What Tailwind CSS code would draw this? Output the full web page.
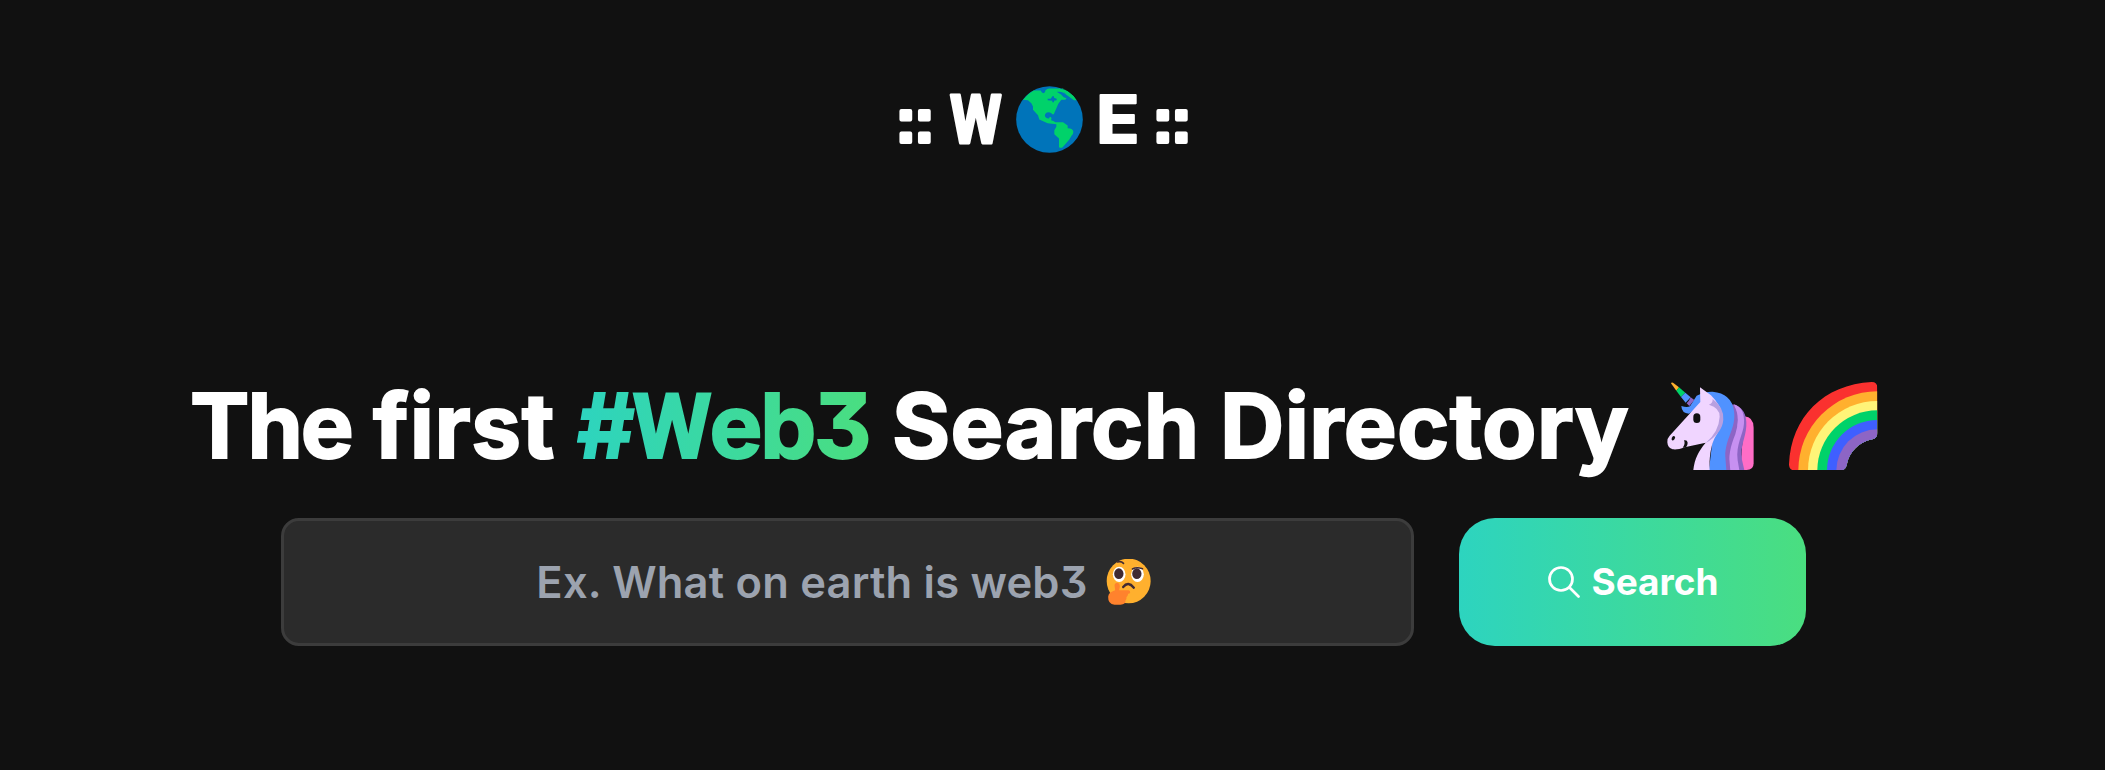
<!DOCTYPE html>
<html lang="en">
<head>
<meta charset="utf-8">
<title>WOE</title>
<script src="https://cdn.jsdelivr.net/npm/@tailwindcss/browser@4"></script>
</head>
<body class="h-[770px] overflow-hidden bg-[#111111] font-['Inter',sans-serif] text-white [font-feature-settings:'cv09']">
<header class="flex h-[239px] justify-center pt-[80px] pr-[20px]">
  <svg class="h-[80px] w-[300px]" viewBox="893 80 300 80" role="img" aria-label="WOE">
    <g fill="#fff" stroke="#fff" stroke-width="4" stroke-linejoin="round" font-weight="700">
      <text x="895.5" y="142" font-family="Liberation Sans" font-size="62" letter-spacing="-2.2">::</text>
      <text x="950" y="142.500" font-family="Roboto" font-size="67" stroke-width="3" textLength="51.5" lengthAdjust="spacingAndGlyphs">W</text>
      <text x="1096" y="143" font-family="Inter" font-size="66" stroke-width="2" textLength="43.5" lengthAdjust="spacingAndGlyphs">E</text>
      <text x="1152.5" y="142" font-family="Liberation Sans" font-size="62" letter-spacing="-2.2">::</text>
    </g>
    <svg x="1016" y="86" width="67" height="67" viewBox="33 32.5 201 201">
      <circle cx="133.500" cy="133" r="100" fill="#0074ba"/>
      <path fill="#00d26a" d="M54 74Q67 56 86 46H107Q110 54 116 54Q122 51 121 46Q127 40 133 40H163L174 49Q180 56 188 57L207 75H214Q200 55 179 43L168 40H174L214 75H207L176 53L166 50H155L168 58L176 66L184 69Q185 73 179 74H169L160 86L147 116Q144 120 141 116Q136 109 126 112Q118 116 120 124Q124 131 132 130Q133 125 138 126Q141 129 138 135Q146 137 151 141H174L188 151V159Q205 160 205 170Q205 178 200 181L193 193L173 216Q168 220 162 216V190L148 177V165L154 155V147L128 144L103 133L99 120L84 104V94L79 84L69 75Z"/>
      <path fill="#00d26a" d="M162 40Q195 45 215 75H207L179 53L168 49L155 47Z"/>
      <path fill="#0074ba" d="M142 63H147V68L155 71V75L147 77V81H142V77L128 75V71H137Z"/>
    </svg>
  </svg>
</header>

<main>
  <h1 class="mt-[133px] flex h-[108px] items-center pl-[190px] text-[89px] leading-[108px] font-bold whitespace-nowrap">
    <span class="w-[183px] shrink-0 tracking-[-2px] [-webkit-text-stroke:2px_white]">The</span>
    <span class="w-[204px] shrink-0 tracking-[0.6px] [-webkit-text-stroke:2px_white]">first</span>
    <span class="w-[315px] shrink-0"><span class="inline-block bg-linear-to-r/srgb from-[#2dd4bf] to-[#4ade80] bg-clip-text tracking-[-2.4px] text-transparent [-webkit-text-stroke:2px_transparent]">#<span class="font-['Roboto'] text-[91px]">W</span>eb3</span></span>
    <span class="w-[328px] shrink-0 tracking-[0.3px] [-webkit-text-stroke:2px_white]">Search</span>
    <span class="w-[447px] shrink-0 tracking-[0.4px] [-webkit-text-stroke:2px_white]">Directory</span>
    <svg class="h-[88.7px] w-[87.3px] shrink-0" viewBox="50 37 262 266" aria-hidden="true">
      <path fill="#ff6dc6" d="M282 140Q310 142 310 174V281Q310 301 289 301H270Z"/>
      <path fill="#8d65c5" d="M248 104Q291 115 288 170C286 206 269 226 275 270L282 301H226L225 160Z"/>
      <path fill="#c790f1" d="M251 104Q284 114 281 162C279 194 256 223 262 272L267 301H239C233 259 241 228 255 194Q270 155 251 104Z"/>
      <path fill="#8d65c5" d="M225 89Q264 108 262 151C259 196 233 219 236 264L240 301H218Z"/>
      <path fill="#5092ff" d="M139 78Q165 65 187 66Q243 71 251 123C259 175 224 206 225 260L228 301H176L188 200Q229 172 202 123L160 101L116 132Q94 131 93 109Q110 115 119 110Z"/>
      <path fill="#f0d5ff" d="M149 53L182 77Q196 91 207 109Q217 133 213 158Q208 184 193 205C181 230 176 266 178 301H129C133 266 145 244 166 219L103 233C88 240 73 240 67 239Q52 235 51 218Q50 206 58 198L150 97Z"/>
      <path fill="#b8a0e0" d="M187 88Q221 112 219 150Q216 191 166 220Q206 186 208 141Q209 115 176 105Q188 101 187 88Z"/>
      <rect x="129" y="131" width="21" height="29" rx="10.500" fill="#111"/>
      <ellipse cx="69" cy="206" rx="4.500" ry="7" fill="#111" transform="rotate(30 69 206)"/>
      <path fill="#111" d="M101 212Q111 210 112 219Q112 228 107 233L97 234Q106 223 101 212Z"/>
      <path fill="#ffb02e" d="M62 41Q63 37 68 39L86 53L78 63Z"/>
      <path fill="#00d26a" d="M86 53L105 69L92 82L78 63Z"/>
      <path fill="#5092ff" d="M105 69L121 83L106 99L92 82Z"/>
      <path fill="#8d65c5" d="M121 83L132 91L117 109L109 101Q116 95 121 83Z"/>
    </svg>
    <svg class="ml-[34.700px] h-[88.700px] w-[88.700px] shrink-0" viewBox="56 37 266 266" aria-hidden="true">
      <defs><clipPath id="arc"><path d="M56 284C62 142 161 44 304 37Q321 37 321 54V190Q321 205 306 209C266 217 236 247 229 286Q225 302 210 302H73Q56 302 56 284Z"/></clipPath></defs>
      <g clip-path="url(#arc)">
        <rect x="56" y="37" width="266" height="266" fill="#fa312f"/>
        <circle cx="321" cy="302" r="237" fill="#ffb02e"/>
        <circle cx="321" cy="302" r="208" fill="#fff478"/>
        <circle cx="321" cy="302" r="180" fill="#00d26a"/>
        <circle cx="321" cy="302" r="151" fill="#3f5fff"/>
        <circle cx="321" cy="302" r="123" fill="#8d65c5"/>
      </g>
    </svg>
  </h1>

  <form class="mt-[38px] flex h-[128px] gap-[45px] pl-[281px]">
    <div class="flex w-[1133px] items-center justify-center rounded-[18px] border-[3px] border-[#3c3c3c] bg-[#2b2b2b] pr-[8px] text-[43.5px] leading-[52px] font-semibold tracking-[0.2px] text-[#9ca3af]">
      <span>Ex. What on earth is web3</span>
      <svg class="ml-[18px] h-[46px] w-[45px] shrink-0" viewBox="33 28 134 138" aria-hidden="true">
        <ellipse cx="100.500" cy="94" rx="66" ry="67" fill="#ffb02e"/>
        <ellipse cx="72" cy="74" rx="19" ry="23" fill="#fff"/><ellipse cx="127" cy="74" rx="19" ry="23" fill="#fff"/>
        <ellipse cx="71" cy="72" rx="14" ry="16" fill="#402a32"/><ellipse cx="125" cy="72" rx="14" ry="16" fill="#402a32"/>
        <path fill="none" stroke="#402a32" stroke-width="5" stroke-linecap="round" d="M67 37Q78 34 85 41M112 58Q124 51 142 57"/>
        <path fill="none" stroke="#402a32" stroke-width="7" stroke-linecap="round" d="M84 112Q99 93 116 114"/>
        <path fill="#ff822d" d="M58 105Q61 98 67 99Q74 101 74 111L72 122H100Q106 123 105 129Q104 132 99 132Q98 139 94 142Q95 149 91 152Q92 165 76 165H58Q38 163 39 141Q40 128 60 122Z"/>
      </svg>
    </div>
    <button type="button" class="flex w-[347px] items-center justify-center rounded-[36px] bg-linear-to-r/srgb from-[#2dd4bf] to-[#4ade80] pl-[2px] text-[37px] leading-[44px] font-bold">
      <svg class="mb-[1px] h-[32px] w-[32px] shrink-0" viewBox="0 0 32 32" fill="none" stroke="currentColor" stroke-width="2.700" stroke-linecap="round" aria-hidden="true"><circle cx="13" cy="13" r="11.500"/><path d="M21.500 21.500L30.500 30.500"/></svg>
      <span class="ml-[11px]">Search</span>
    </button>
  </form>
</main>
</body>
</html>
